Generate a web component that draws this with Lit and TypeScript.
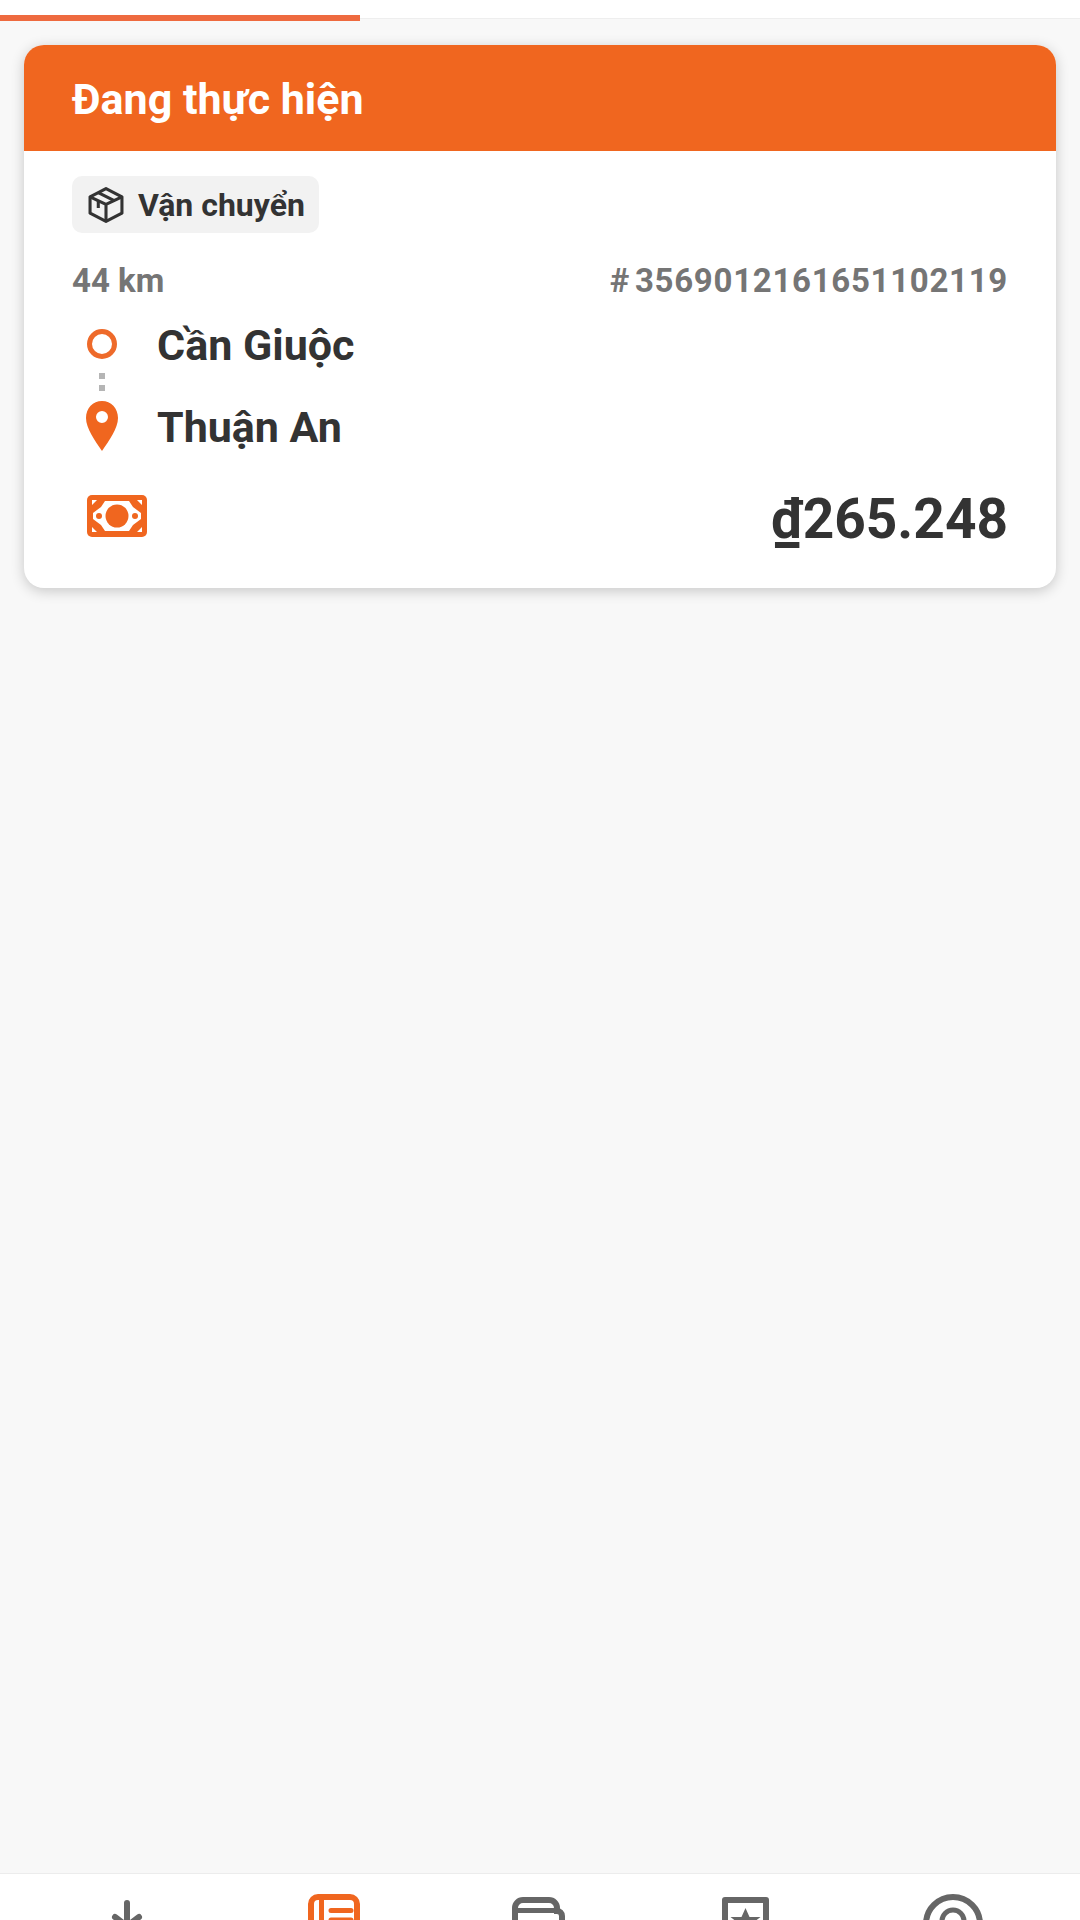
import { LitElement, css, html, svg } from 'lit'
import { customElement } from 'lit/decorators.js'

const navIcons = [
  { active: false, art: svg`<path d="M27 9v24M15 23l12 9 12-9" fill="none" stroke="currentColor" stroke-width="6" stroke-linecap="round" stroke-linejoin="round"/>` },
  { active: true, art: svg`<rect x="4" y="3" width="46" height="48" rx="7" fill="none" stroke="currentColor" stroke-width="6"/><path d="M14.5 3v48" stroke="currentColor" stroke-width="5"/><path d="M24 16.5h20M24 26h20" fill="none" stroke="currentColor" stroke-width="5" stroke-linecap="round"/>` },
  { active: false, art: svg`<path d="M2 56V14a8 8 0 0 1 8-8h26a8 8 0 0 1 8 8v3a5 5 0 0 1 5 5v34" fill="none" stroke="currentColor" stroke-width="6"/><path d="M2 16.5h42" stroke="currentColor" stroke-width="5"/>` },
  { active: false, art: svg`<rect x="6" y="6" width="41" height="56" fill="none" stroke="currentColor" stroke-width="6" stroke-linejoin="round"/><path d="M26.5 14l4 9h11l-9 7 3 10-9-6-9 6 3-10-9-7h11z" fill="currentColor"/>` },
  { active: false, art: svg`<circle cx="27" cy="30" r="27" fill="none" stroke="currentColor" stroke-width="6"/><circle cx="27" cy="27" r="11" fill="none" stroke="currentColor" stroke-width="5"/>` },
]

@customElement('app-root')
export class AppRoot extends LitElement {
  render() {
    return html`
      <div class="top"><div class="progress"></div></div>
      <main class="list">
        <section class="card">
          <header class="card-head">Đang thực hiện</header>
          <div class="card-body">
            <div class="chip">
              <svg class="chip-icon" viewBox="0 0 35 35" fill="none" stroke="currentColor" stroke-width="3" stroke-linejoin="round">
                <path d="M17.5 1.5 33 9.5v16l-15.500 8L2 25.500v-16z"/>
                <path d="M2 9.500 17.500 17 33 9.500M17.500 17v16"/>
                <path d="M10 5.500 25 13M10 13.500v7"/>
              </svg>
              <span>Vận chuyển</span>
            </div>
            <div class="meta">
              <span>44 km</span>
              <span class="code"># 3569012161651102119</span>
            </div>
            <div class="route">
              <div class="stop">
                <span class="marker"><span class="ring"></span></span>
                <span class="place">Cần Giuộc</span>
              </div>
              <div class="dots"><i></i><i></i></div>
              <div class="stop">
                <span class="marker">
                  <svg class="pin" viewBox="0 0 32 50">
                    <path fill-rule="evenodd" d="M16 0c9 0 16 7 16 17 0 10-9 23-16 33C9 40 0 27 0 17 0 7 7 0 16 0zm0 10a6 6 0 1 0 0 12 6 6 0 0 0 0-12z"/>
                  </svg>
                </span>
                <span class="place">Thuận An</span>
              </div>
            </div>
            <div class="fare">
              <svg class="cash" viewBox="0 0 60 42">
                <rect width="60" height="42" rx="5"/>
                <path fill="#fff" d="M5 5h5l-5 5zM55 5h-5l5 5zM5 37h5l-5-5zM55 37h-5l5-5z"/>
                <path fill="#fff" d="M18 6h24l4 6 8 6v6l-8 6-4 6H18l-4-6-8-6v-6l8-6z"/>
                <circle cx="30" cy="21" r="11.500"/>
                <circle cx="12" cy="21" r="3"/>
                <circle cx="48" cy="21" r="3"/>
              </svg>
              <span class="price">₫265.248</span>
            </div>
          </div>
        </section>
      </main>
      <nav class="tabs">
        ${navIcons.map(
          (item) => html`
            <div class="tab ${item.active ? 'active' : ''}">
              <svg viewBox="0 0 54 54" width="54" height="54">${item.art}</svg>
            </div>
          `
        )}
      </nav>
    `
  }

  static styles = css`
    :host {
      display: flex;
      flex-direction: column;
      height: 1920px;
      overflow: hidden;
      background: #f8f8f8;
      font-family: Roboto, 'Noto Sans', sans-serif;
      color: #333;
    }

    .top {
      height: 19px;
      flex: none;
      background: #fff;
      border-bottom: 1px solid #eee;
      padding-top: 15px;
      box-sizing: border-box;
    }
    .progress {
      width: 360px;
      height: 6px;
      background: #ee6a3f;
    }

    .list {
      flex: 1;
      padding: 26px 24px 0;
    }

    .card {
      background: #fff;
      border-radius: 20px;
      overflow: hidden;
      box-shadow: 0 3px 14px rgba(0, 0, 0, 0.2);
    }
    .card-head {
      height: 106px;
      padding: 2px 48px 0;
      box-sizing: border-box;
      display: flex;
      align-items: center;
      background: #f0661f;
      color: #fff;
      font-size: 43px;
      font-weight: 700;
    }
    .card-body {
      padding: 25px 48px 0;
      height: 437px;
      box-sizing: border-box;
    }

    .chip {
      display: inline-flex;
      align-items: center;
      gap: 14px;
      height: 57px;
      padding: 0 14px 0 16px;
      background: #f2f2f2;
      border-radius: 10px;
      font-size: 32px;
      font-weight: 700;
    }
    .chip-icon {
      width: 36px;
      height: 36px;
    }

    .meta {
      display: flex;
      justify-content: space-between;
      margin-top: 28px;
      color: #757575;
      font-size: 33px;
      font-weight: 700;
      line-height: 40px;
    }
    .code {
      letter-spacing: 0.7px;
      word-spacing: -4px;
    }

    .route {
      margin-top: 19px;
    }
    .stop {
      display: flex;
      align-items: center;
      height: 50px;
    }
    .marker {
      width: 60px;
      margin-right: 25px;
      flex: none;
      display: flex;
      justify-content: center;
    }
    .ring {
      width: 30px;
      height: 30px;
      margin-bottom: 3px;
      box-sizing: border-box;
      border: 5px solid #ee6a2a;
      border-radius: 50%;
    }
    .pin {
      width: 32px;
      height: 50px;
      margin-bottom: 2px;
      fill: #f0661f;
    }
    .place {
      font-size: 43px;
      font-weight: 700;
    }
    .dots {
      width: 60px;
      height: 32px;
      padding-bottom: 9px;
      box-sizing: border-box;
      display: flex;
      flex-direction: column;
      align-items: center;
      justify-content: center;
      gap: 6px;
    }
    .dots i {
      width: 6px;
      height: 6px;
      background: #b5b5b5;
    }

    .fare {
      display: flex;
      justify-content: space-between;
      align-items: center;
      margin-top: 35px;
    }
    .cash {
      width: 60px;
      height: 42px;
      margin: 0 0 6px 15px;
      fill: #f0661f;
    }
    .price {
      font-size: 55px;
      font-weight: 700;
    }

    .tabs {
      flex: none;
      height: 47px;
      overflow: hidden;
      box-sizing: border-box;
      border-top: 1px solid #ececec;
      background: #fff;
      padding: 20px 24px 0;
      display: grid;
      grid-template-columns: repeat(5, 1fr);
      color: #666;
    }
    .tab {
      display: flex;
      justify-content: center;
    }
    .tab svg {
      overflow: visible;
    }
    .tab.active {
      color: #f0661f;
    }
  `
}

declare global {
  interface HTMLElementTagNameMap {
    'app-root': AppRoot
  }
}
